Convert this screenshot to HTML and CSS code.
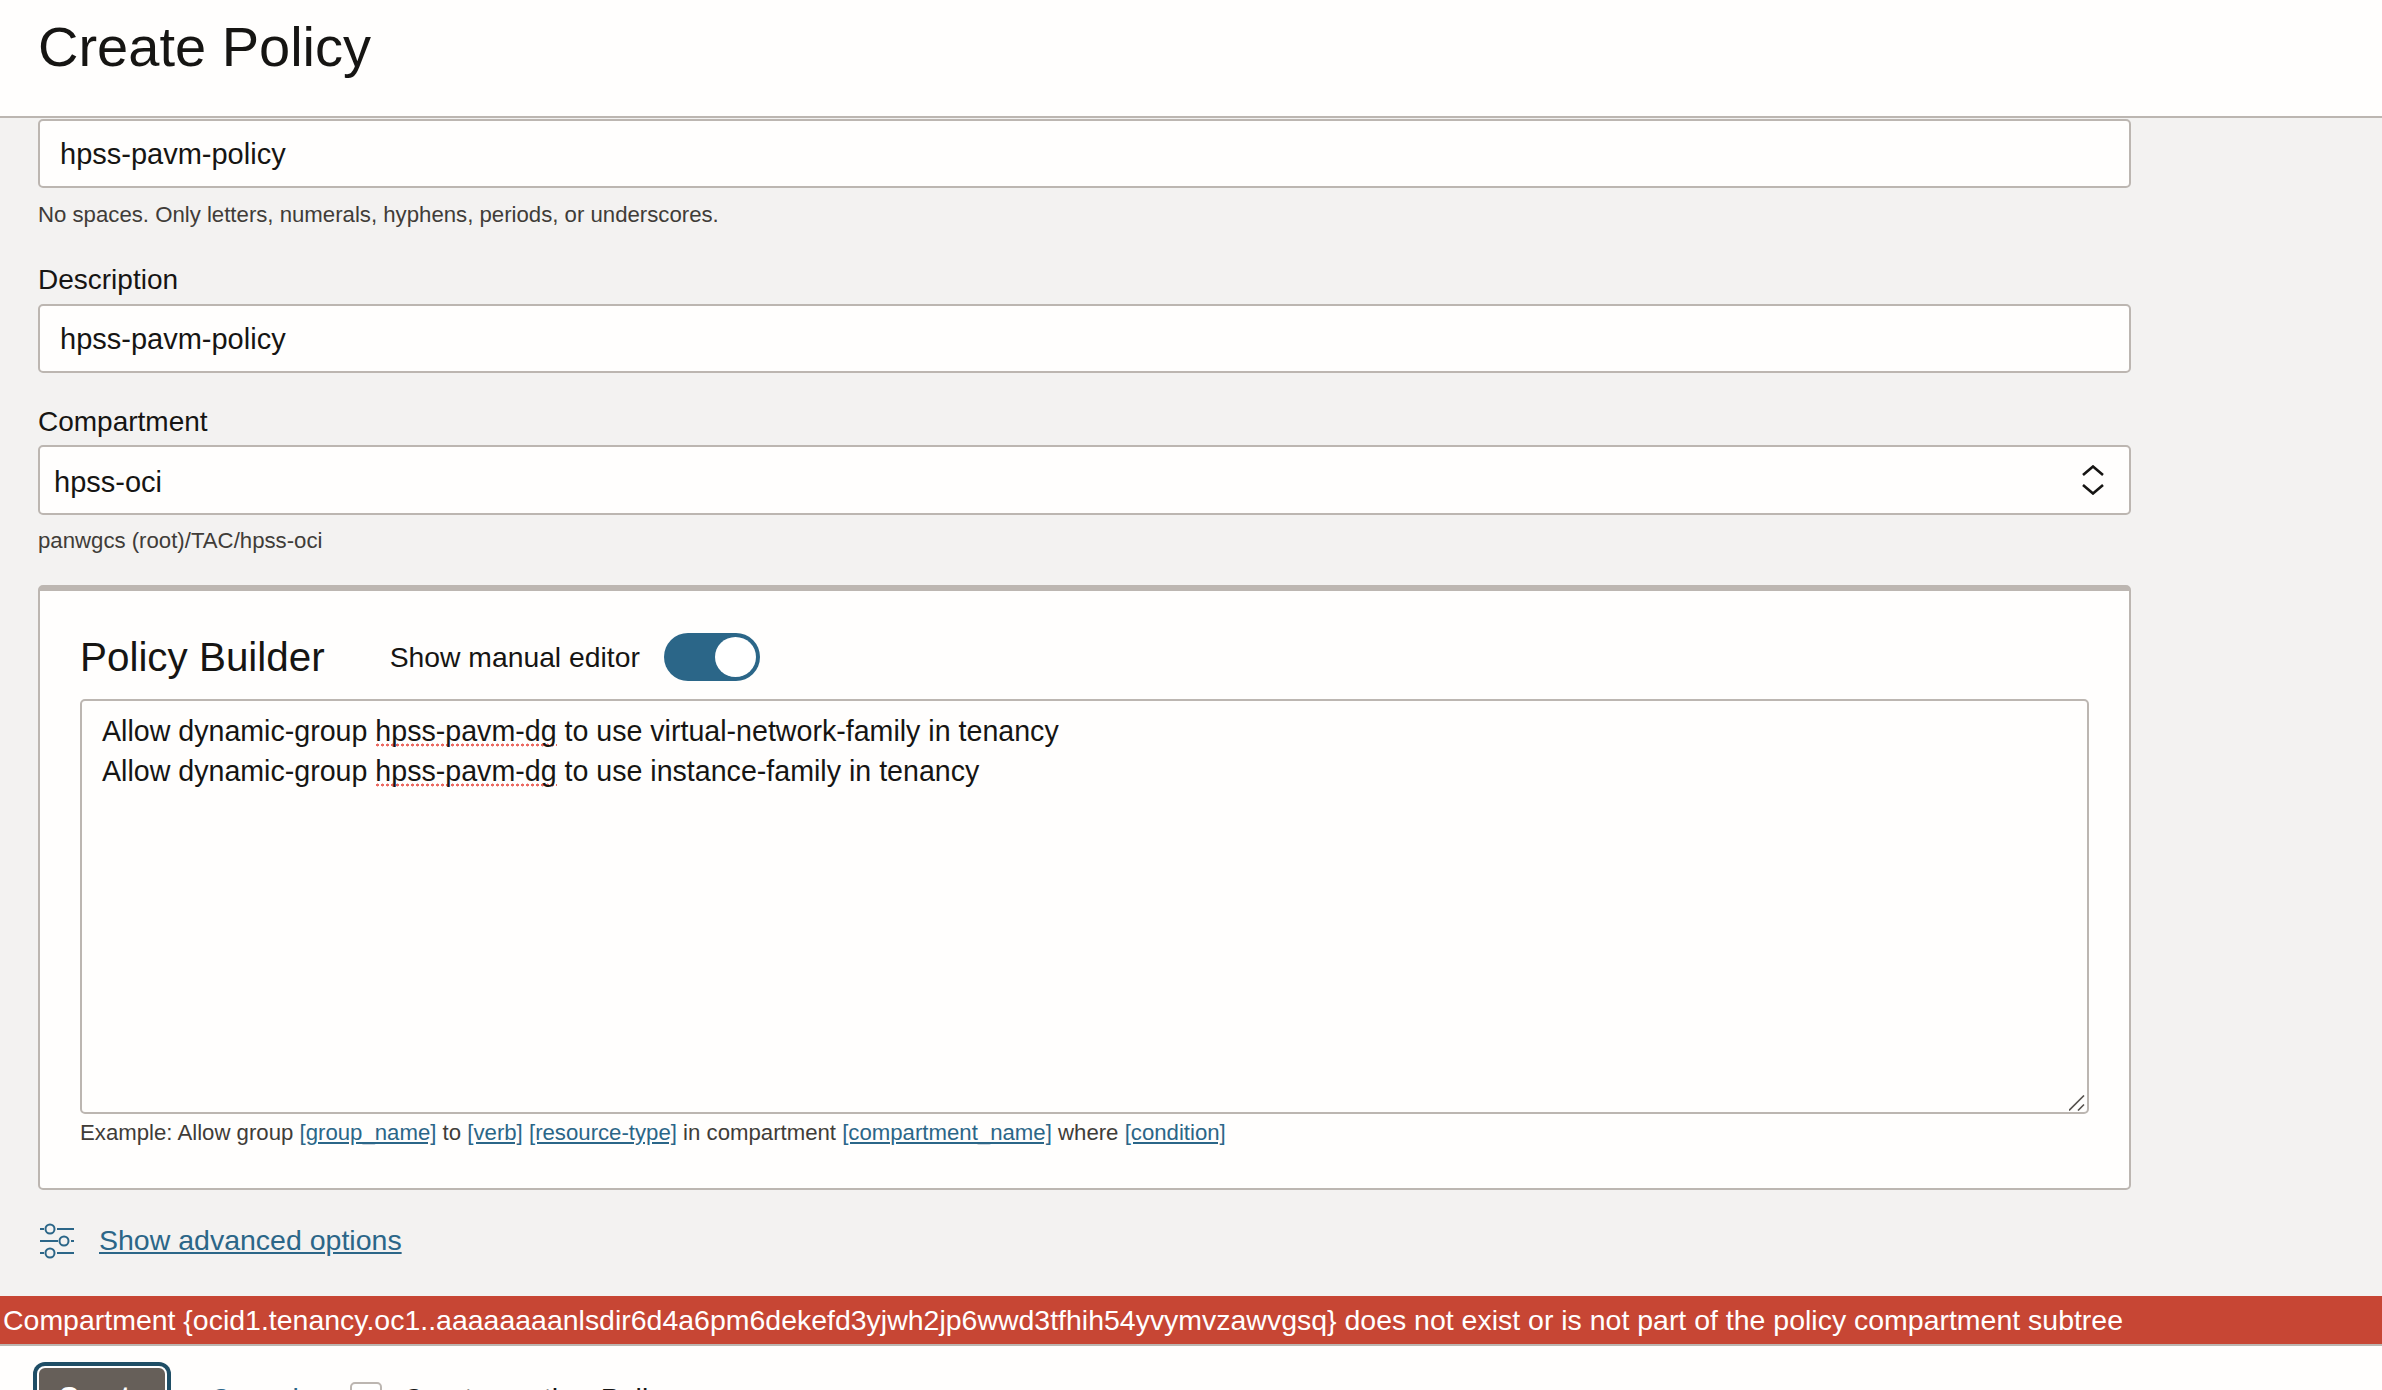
FILE: index.html
```html
<!DOCTYPE html>
<html lang="en">
<head>
<meta charset="utf-8">
<title>Create Policy</title>
<link rel="stylesheet" href="styles.css">
</head>
<body>
<header class="page-header"><h1 class="page-title">Create Policy</h1></header>
<main class="content">
  <div class="form">
    <div class="input"><span class="input-value">hpss-pavm-policy</span></div>
    <p class="hint hint-name">No spaces. Only letters, numerals, hyphens, periods, or underscores.</p>
    <label class="label label-desc">Description</label>
    <div class="input"><span class="input-value">hpss-pavm-policy</span></div>
    <label class="label label-comp">Compartment</label>
    <div class="input input-select">
      <span class="select-value">hpss-oci</span>
      <svg class="updown" width="22" height="30" viewBox="0 0 22 30" fill="none" stroke="#161513" stroke-width="2.6"><path d="M1 10 11 1.5 21 10"/><path d="M1 20 11 28.5 21 20"/></svg>
    </div>
    <p class="hint">panwgcs (root)/TAC/hpss-oci</p>
    <section class="card">
      <div class="card-head">
        <h2 class="card-title">Policy Builder</h2>
        <span class="toggle-label">Show manual editor</span>
        <span class="toggle"><span class="knob"></span></span>
      </div>
      <div class="editor">
        <div class="editor-line">Allow dynamic-group <span class="misspelt">hpss-pavm-dg</span> to use virtual-network-family in tenancy</div>
        <div class="editor-line">Allow dynamic-group <span class="misspelt">hpss-pavm-dg</span> to use instance-family in tenancy</div>
        <svg class="grip" width="16" height="16" viewBox="0 0 16 16" stroke="#55514d" stroke-width="1.6" fill="none"><path d="M0 15.5 15 .5M9 15.5 15 9.5"/></svg>
      </div>
      <p class="example">Example: Allow group <a href="#">[group_name]</a> to <a href="#">[verb]</a> <a href="#">[resource-type]</a> in compartment <a href="#">[compartment_name]</a> where <a href="#">[condition]</a></p>
    </section>
    <div class="advanced">
      <svg class="sliders" width="34" height="36" viewBox="0 0 34 36" fill="none" stroke="#2b6688" stroke-width="2"><path d="M0 6H4M17 6H34M0 18H18M31 18H34M0 30H4M17 30H34"/><circle cx="10" cy="6" r="4.5"/><circle cx="24" cy="18" r="4.5"/><circle cx="10" cy="30" r="4.5"/></svg>
      <a class="advanced-link" href="#">Show advanced options</a>
    </div>
  </div>
</main>
<div class="error-bar">Compartment {ocid1.tenancy.oc1..aaaaaaaanlsdir6d4a6pm6dekefd3yjwh2jp6wwd3tfhih54yvymvzawvgsq} does not exist or is not part of the policy compartment subtree</div>
<footer class="footer">
  <button class="btn-create">Create</button>
  <a class="cancel" href="#">Cancel</a>
  <span class="check-box"></span>
  <span class="check-label">Create another Policy</span>
</footer>
</body>
</html>
```
FILE: styles.css
```css
* { box-sizing: border-box; }
html, body { margin: 0; height: 1390px; overflow: hidden; }
body { background: #f3f2f1; color: #161513; font-family: "Liberation Sans", Arial, sans-serif; font-size: 28.5px; }
a { color: #2b6688; }
.page-header { height: 118px; background: #fffefd; border-bottom: 2px solid #bcb6b1; padding: 16px 38px 0; }
.page-title { margin: 0; font-size: 56px; font-weight: 400; line-height: 62px; }
.content { height: 1178px; padding: 1px 0 0 38px; }
.form { width: 2093px; }
.input { height: 69px; background: #fffefd; border: 2px solid #bcb6b1; border-radius: 5px; padding: 0 20px; display: flex; align-items: center; font-size: 29px; }
.input-value { padding-top: 2px; }
.input-select { height: 70px; justify-content: space-between; padding: 0 25px 0 14px; }
.select-value { padding-top: 4px; }
.hint { margin: 11px 0 0; font-size: 22.2px; line-height: 30px; color: #403c38; }
.hint-name { margin-top: 12px; }
.label { display: block; font-size: 28px; line-height: 34px; margin-bottom: 7px; }
.label-desc { margin-top: 33px; }
.label-comp { margin-top: 32px; margin-bottom: 6px; }
.card { margin-top: 29px; height: 605px; background: #fffefd; border: 2px solid #bcb6b1; border-top-width: 6px; border-radius: 5px; padding: 0 40px; }
.card-head { height: 108px; padding-top: 24px; display: flex; align-items: center; }
.card-title { margin: 0 65px 0 0; font-size: 40.4px; font-weight: 400; }
.toggle-label { margin-right: 24px; font-size: 28.3px; }
.toggle { width: 96px; height: 48px; border-radius: 24px; background: #2b6688; padding: 4px; display: flex; justify-content: flex-end; }
.knob { width: 41px; height: 40px; border-radius: 50%; background: #fff; }
.editor { position: relative; height: 415px; border: 2px solid #bcb6b1; border-radius: 5px; padding: 11px 20px; }
.editor-line { line-height: 39.5px; font-size: 28.6px; }
.misspelt { background: radial-gradient(circle, #ec6a62 1.3px, transparent 1.7px) repeat-x 0 100% / 5px 4px; }
.grip { position: absolute; right: 2px; bottom: 1px; }
.example { margin: 4px 0 0; font-size: 22.2px; line-height: 30px; color: #403c38; }
.advanced { display: flex; align-items: center; gap: 25px; height: 36px; margin-top: 33px; padding-left: 2px; }
.advanced-link { font-size: 28.5px; padding-bottom: 2px; }
.error-bar { height: 50px; background: #c74634; color: #fff; border-bottom: 2px solid #bcb6b1; padding-left: 3px; font-size: 28.47px; line-height: 49px; white-space: nowrap; }
.footer { height: 44px; background: #fffefd; display: flex; align-items: flex-start; padding: 16px 0 0 37px; overflow: hidden; }
.btn-create { width: 130px; height: 62px; flex: none; margin-top: 4px; background: #665f59; color: #fff; font: 700 28px "Liberation Sans", Arial, sans-serif; border: 2px solid #fff; border-radius: 8px; box-shadow: 0 0 0 4px #1f4e66; }
.cancel { margin: 20px 0 0 43px; font-size: 28.5px; line-height: 33px; }
.check-box { width: 32px; height: 32px; margin: 20px 0 0 51px; background: #fff; border: 2px solid #bcb6b1; border-radius: 5px; flex: none; }
.check-label { margin: 20px 0 0 21px; font-size: 28.5px; line-height: 33px; }
```
